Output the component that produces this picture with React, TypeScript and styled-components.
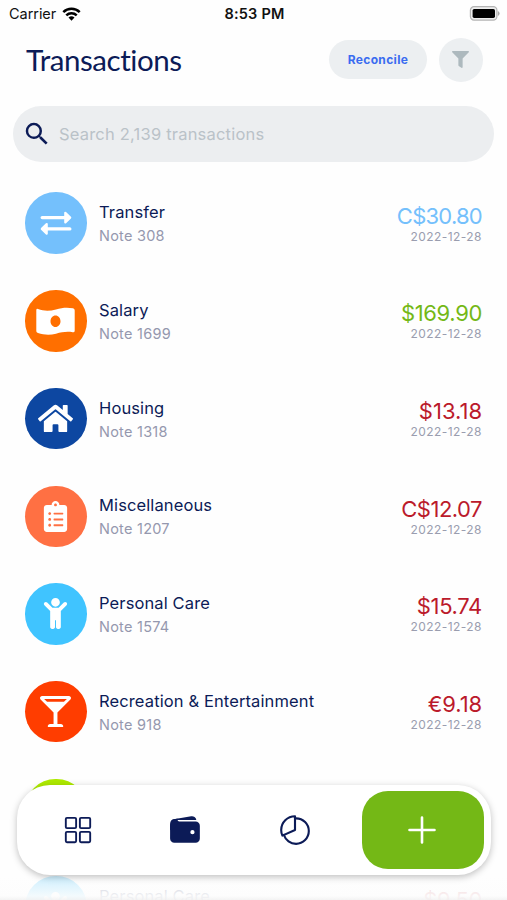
import React from "react";
import styled, { createGlobalStyle } from "styled-components";
import { FaHome, FaClipboardList, FaChild, FaGlassMartiniAlt, FaFilter } from "react-icons/fa";
import { IoWallet, IoPieChartOutline, IoGridOutline } from "react-icons/io5";
import { MdSearch } from "react-icons/md";

const NAVY = "#0c1b57";

const GlobalStyle = createGlobalStyle`
  *, *::before, *::after { box-sizing: border-box; }
  body { margin: 0; background: #fefefe; }
  svg { display: block; flex: none; }
`;

const Screen = styled.main`
  position: relative;
  width: 507px;
  height: 900px;
  overflow: hidden;
  background: #fefefe;
  color: ${NAVY};
  font-family: Inter, "Liberation Sans", sans-serif;
`;

const StatusBar = styled.div`
  display: grid;
  grid-template-columns: 1fr auto 1fr;
  align-items: center;
  height: 27px;
  padding: 0 7px 0 9px;
  color: #111;
  font-size: 14.5px;
`;

const Carrier = styled.div`
  display: flex;
  align-items: center;
  gap: 6px;
  letter-spacing: -0.05px;
`;

const Clock = styled.div`
  font-weight: 600;
  font-size: 14.5px;
  letter-spacing: 0.2px;
`;

const BatterySlot = styled.div`
  display: flex;
  justify-content: flex-end;
`;

const Header = styled.header`
  display: flex;
  align-items: center;
  height: 65px;
  padding: 0 24px 0 26px;
`;

const Title = styled.h1`
  flex: 1;
  margin: 0;
  font: 400 29.5px/40px Lato, "Open Sans", sans-serif;
  letter-spacing: -0.45px;
`;

const ReconcileButton = styled.button`
  width: 98px;
  height: 39px;
  margin-right: 12px;
  padding: 0;
  border: 0;
  border-radius: 20px;
  background: #eceff1;
  color: #3a6cf0;
  font: 700 12px Inter, sans-serif;
  letter-spacing: 0.35px;
`;

const FilterButton = styled.button`
  display: flex;
  align-items: center;
  justify-content: center;
  width: 44px;
  height: 44px;
  padding: 0 1px 0 0;
  border: 0;
  border-radius: 50%;
  background: #eceff1;
  color: #adb9be;
`;

const SearchBar = styled.div`
  display: flex;
  align-items: center;
  gap: 7px;
  height: 56px;
  margin: 14px 13px 0;
  padding-left: 9px;
  border-radius: 28px;
  background: #eceef0;
  color: ${NAVY};
`;

const Placeholder = styled.span`
  color: #bac2c8;
  font-size: 16.5px;
  letter-spacing: 0.2px;
`;

const List = styled.ul`
  margin: 12.4px 0 0;
  padding: 0;
  list-style: none;
`;

const Row = styled.li`
  display: flex;
  align-items: center;
  height: 97.7px;
  padding: 0 25px 0 25px;
`;

const Badge = styled.div<{ $color: string }>`
  display: flex;
  flex: none;
  align-items: center;
  justify-content: center;
  width: 61.5px;
  height: 61.5px;
  border-radius: 50%;
  background: ${(p) => p.$color};
  color: #fff;
`;

const Details = styled.div`
  flex: 1;
  padding: 2px 0 0 12.5px;
`;

const Name = styled.div`
  font-size: 16.5px;
  line-height: 24px;
  letter-spacing: 0.12px;
`;

const Note = styled.div`
  color: #9598ae;
  font-size: 14.5px;
  line-height: 24px;
  letter-spacing: 0.25px;
`;

const Figures = styled.div`
  padding-top: 3px;
  text-align: right;
`;

const Amount = styled.div<{ $color: string; $tracking?: string }>`
  color: ${(p) => p.$color};
  font-size: 22px;
  line-height: 24px;
  letter-spacing: ${(p) => p.$tracking ?? "-0.35px"};
`;

const DateText = styled.div`
  color: #9a9daf;
  font-size: 12px;
  line-height: 18px;
  letter-spacing: 0.45px;
`;

const BottomFade = styled.div`
  position: absolute;
  left: 0;
  right: 0;
  bottom: 0;
  height: 50px;
  background: linear-gradient(
    rgba(254, 254, 254, 0.5),
    rgba(254, 254, 254, 0.74) 52%,
    rgba(253, 253, 253, 0.95) 92%,
    rgba(243, 243, 243, 0.98)
  );
`;

const TabBar = styled.nav`
  position: absolute;
  left: 17px;
  bottom: 25px;
  display: grid;
  grid-template-columns: 122px 91px 130px 122px;
  align-items: center;
  width: 474px;
  height: 90px;
  border-radius: 33px;
  background: #fff;
  box-shadow: 0 2px 7px rgba(0, 0, 0, 0.25);
`;

const Tab = styled.button`
  display: flex;
  align-items: center;
  justify-content: center;
  height: 78px;
  padding: 0;
  border: 0;
  background: none;
  color: ${NAVY};
`;

const AddButton = styled(Tab)`
  margin-left: 2px;
  width: 122px;
  padding-right: 3px;
  border-radius: 26px;
  background: #74b816;
  color: #fff;
`;

const Wifi = () => (
  <svg width="19" height="14" viewBox="0 0 19 14">
    <g fill="none" stroke="#000" strokeWidth="2.5">
      <path d="M1.3 5.1a11.6 11.6 0 0 1 16.4 0" />
      <path d="M4.3 8.3a7.4 7.4 0 0 1 10.4 0" />
    </g>
    <path fill="#000" d="M6.5 10.6a4.3 4.3 0 0 1 6 0L9.5 13.8z" />
  </svg>
);

const Battery = () => (
  <svg width="31" height="15" viewBox="0 0 31 15">
    <rect x="1.4" y=".7" width="26.5" height="13.4" rx="3.6" fill="#eee" stroke="#b4b4b4" strokeWidth="1.2" />
    <rect x="3.6" y="2.9" width="22.4" height="9" rx="1.6" />
    <path d="M28.8 5v5q1.8-.8 1.8-2.5T28.8 5z" fill="#aaa" />
  </svg>
);

const TransferIcon = () => (
  <svg width="32" height="26" viewBox="0 0 32 26" fill="currentColor" stroke="currentColor" strokeLinecap="round" strokeLinejoin="round">
    <path d="M2.2 7.6H26M6 18.9h23.8" strokeWidth="3.4" fill="none" />
    <path d="M25.3 2.8v9.600l4.900-4.800zM6.700 14.100v9.600l-4.900-4.800z" strokeWidth="2.2" />
  </svg>
);

const BillIcon = () => (
  <svg width="39" height="28" viewBox="0 0 39 28">
    <path
      fill="currentColor"
      fillRule="evenodd"
      d="M2 2C8 4.300 14 4.100 20 2.400 26 .6 31 .2 37 1.200q1.700.3 1.700 2v20.500q0 1.800-2 1.500C31 24.300 26 25 20 26.700 14 28.200 8 28 2 26 .5 25.500.3 24.800.3 23.600V3.200Q.3 1.400 2 2zM19.500 8.400c-2.800 0-5 2.600-5 5.800s2.200 5.800 5 5.800 5-2.600 5-5.800-2.200-5.800-5-5.800z"
    />
  </svg>
);

const PlusIcon = () => (
  <svg width="28" height="28" viewBox="0 0 28 28">
    <path d="M14 1.500v25M1.500 14h25" stroke="currentColor" strokeWidth="2.600" strokeLinecap="round" />
  </svg>
);

type Transaction = {
  name: string;
  note: string;
  amount: string;
  tracking?: string;
  tint: string;
  color: string;
  icon: React.ReactNode;
};

const RED = "#bb1a2b";

const transactions: Transaction[] = [
  { name: "Transfer", note: "Note 308", amount: "C$30.80", tracking: "-0.75px", tint: "#74c0fc", color: "#74c0fc", icon: <TransferIcon /> },
  { name: "Salary", note: "Note 1699", amount: "$169.90", tint: "#74b816", color: "#ff6f00", icon: <BillIcon /> },
  { name: "Housing", note: "Note 1318", amount: "$13.18", tracking: "0", tint: RED, color: "#0d47a1", icon: <FaHome size={35} /> },
  { name: "Miscellaneous", note: "Note 1207", amount: "C$12.07", tracking: "-0.5px", tint: RED, color: "#ff7043", icon: <FaClipboardList size={31} /> },
  { name: "Personal Care", note: "Note 1574", amount: "$15.74", tint: RED, color: "#40c4ff", icon: <FaChild size={31} /> },
  { name: "Recreation & Entertainment", note: "Note 918", amount: "€9.18", tracking: "-0.1px", tint: RED, color: "#ff3d00", icon: <FaGlassMartiniAlt size={31} /> },
  { name: "", note: "", amount: "", tint: RED, color: "#aeea00", icon: null },
  { name: "Personal Care", note: "Note", amount: "$9.50", tint: RED, color: "#40c4ff", icon: <FaChild size={31} /> },
];

export default function App() {
  return (
    <Screen>
      <GlobalStyle />
      <StatusBar>
        <Carrier>
          Carrier <Wifi />
        </Carrier>
        <Clock>8:53 PM</Clock>
        <BatterySlot>
          <Battery />
        </BatterySlot>
      </StatusBar>
      <Header>
        <Title>Transactions</Title>
        <ReconcileButton>Reconcile</ReconcileButton>
        <FilterButton aria-label="Filter">
          <FaFilter size={17} />
        </FilterButton>
      </Header>
      <SearchBar>
        <MdSearch size={30} />
        <Placeholder>Search 2,139 transactions</Placeholder>
      </SearchBar>
      <List>
        {transactions.map((t, i) => (
          <Row key={i}>
            <Badge $color={t.color}>{t.icon}</Badge>
            <Details>
              <Name>{t.name}</Name>
              <Note>{t.note}</Note>
            </Details>
            {t.amount && (
              <Figures>
                <Amount $color={t.tint} $tracking={t.tracking}>
                  {t.amount}
                </Amount>
                <DateText>2022-12-28</DateText>
              </Figures>
            )}
          </Row>
        ))}
      </List>
      <BottomFade />
      <TabBar>
        <Tab aria-label="Overview">
          <IoGridOutline size={30} />
        </Tab>
        <Tab aria-label="Transactions">
          <IoWallet size={34} />
        </Tab>
        <Tab aria-label="Reports">
          <IoPieChartOutline size={34} />
        </Tab>
        <AddButton aria-label="Add transaction">
          <PlusIcon />
        </AddButton>
      </TabBar>
    </Screen>
  );
}
